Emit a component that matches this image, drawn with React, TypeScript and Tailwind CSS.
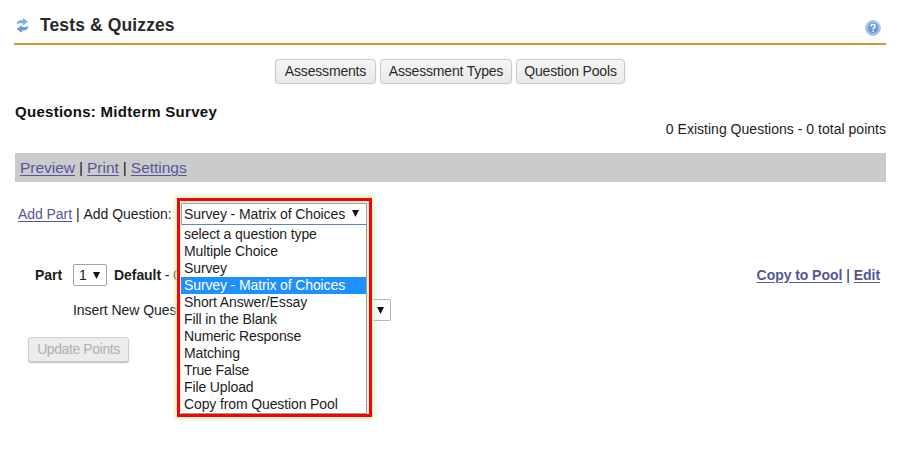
import React from "react";

const questionTypes = [
  "select a question type",
  "Multiple Choice",
  "Survey",
  "Survey - Matrix of Choices",
  "Short Answer/Essay",
  "Fill in the Blank",
  "Numeric Response",
  "Matching",
  "True False",
  "File Upload",
  "Copy from Question Pool",
];

function RefreshIcon() {
  return (
    <svg className="mt-[18px] ml-[2px] h-[15px] w-[13px] shrink-0" viewBox="0 0 13 15">
      <path d="M1 5.6 Q1.6 2.4 5 2.6 L7.2 2.6 V0.5 L11.4 3.8 L7.2 6.8 V5 H4.5 Q2.5 4.8 1 5.6Z" fill="#76b5e6" stroke="#5b9bd5" strokeWidth=".5" />
      <path d="M12 8.6 Q11.4 12.2 8 12 L5.6 12 V14.2 L1 11 L5.6 7.8 V9.6 H8.5 Q10.5 9.6 12 8.6Z" fill="#669ee2" stroke="#3e73c4" strokeWidth=".5" />
    </svg>
  );
}

function HelpIcon() {
  return (
    <svg className="mt-[20px] mr-[5px] h-4 w-4" viewBox="0 0 16 16">
      <circle cx="8" cy="8" r="7.4" fill="#a9c5ee" stroke="#92b2e3" strokeWidth=".7" />
      <circle cx="8" cy="8" r="5.4" fill="#6c99dc" />
      <path d="M5.9 6.4 Q6 4.5 8 4.5 Q10.1 4.5 10.1 6.2 Q10.1 7.2 9 7.8 Q8.1 8.2 8.1 9.2" fill="none" stroke="#fff" strokeWidth="1.5" />
      <circle cx="8.1" cy="11.1" r=".9" fill="#fff" />
    </svg>
  );
}

function Arrow({ className = "" }: { className?: string }) {
  return (
    <svg className={`h-[7px] w-[7px] shrink-0 ${className}`} viewBox="0 0 7 7">
      <path d="M0 0H7L3.5 7Z" fill="#111" />
    </svg>
  );
}

function NavButton({ className, children }: { className: string; children: string }) {
  return (
    <button className={`h-[25px] rounded-[4px] border border-[#cacaca] bg-gradient-to-b from-[#f5f5f5] to-[#e9e9e9] pb-px text-center tracking-[-0.18px] whitespace-nowrap text-[#2b2b2b] shadow-[0_0_1px_#ccc] ${className}`}>
      {children}
    </button>
  );
}

function Link({ children }: { children: string }) {
  return <a className="text-[#56569c] underline decoration-1 underline-offset-[2px]">{children}</a>;
}

function QuestionTypeSelect() {
  return (
    <div className="absolute top-0 left-0 z-10 h-[219px] w-[195px] border-[3px] border-[#fb0007] bg-[#e4f3cc] pt-[2px] pl-px tracking-[-0.12px] shadow-[0_0_4px_2px_#dcf0b8]">
      <div className="flex h-[22px] w-[186px] items-center border border-[#8fa9bb] border-b-[#6683aa] bg-white pl-[2px]">
        <span className="w-[168px] whitespace-nowrap">Survey - Matrix of Choices</span>
        <Arrow className="mb-[2px]" />
      </div>
      <ul className="h-[189px] w-[186px] border-r border-b border-[#8ca4a0] bg-white pt-px">
        {questionTypes.map((type, i) => (
          <li key={type} className={`h-[17px] pl-[3px] leading-[17px] whitespace-nowrap ${i === 3 ? "bg-[#1e90ff] text-white" : ""}`}>
            {type}
          </li>
        ))}
      </ul>
    </div>
  );
}

export default function App() {
  return (
    <main className="h-[456px] w-[908px] overflow-hidden bg-white pr-[22px] pl-[14px] font-['Liberation_Sans',Arial,sans-serif] text-[14px] leading-[17px] tracking-[-0.06px] text-[#1d1d1d]">
      <header className="flex h-[45px] items-start border-b-2 border-[#cb9b36]">
        <RefreshIcon />
        <h1 className="mt-[15px] ml-[11px] grow text-[17.5px] leading-[21px] font-bold tracking-[0.12px] text-[#292929]">Tests &amp; Quizzes</h1>
        <HelpIcon />
      </header>
      <nav className="mt-[14px] flex gap-1 pl-[261px]">
        <NavButton className="w-[101px]">Assessments</NavButton>
        <NavButton className="w-[132px]">Assessment Types</NavButton>
        <NavButton className="w-[109px]">Question Pools</NavButton>
      </nav>
      <h2 className="mt-[19px] h-[18px] pl-px text-[15px] font-bold tracking-[0.28px] text-[#111]">Questions: Midterm Survey</h2>
      <p className="text-right tracking-[0.02px]">0 Existing Questions - 0 total points</p>
      <div className="mt-[15px] ml-px flex h-[29px] items-center gap-1 bg-[#cbcbcb] pl-[5px] text-[15.5px] tracking-[-0.02px]">
        <Link>Preview</Link>
        <span>|</span>
        <Link>Print</Link>
        <span>|</span>
        <Link>Settings</Link>
      </div>
      <div className="mt-[16px] flex h-[36px] pl-1">
        <div className="mt-[8px] flex w-[159px] gap-1 whitespace-nowrap">
          <Link>Add Part</Link>
          <span>|</span>
          <span>Add Question:</span>
        </div>
        <div className="relative w-[195px]">
          <QuestionTypeSelect />
        </div>
      </div>
      <div className="mt-[30px] flex h-[22px] items-center pl-[21px]">
        <b className="w-[38px]">Part</b>
        <div className="flex h-[22px] w-[34px] items-center justify-between rounded-[2px] border border-[#a5a5a5] bg-white pr-[6px] pl-[5px]">
          1<Arrow />
        </div>
        <span className="ml-[7px] grow whitespace-nowrap"><b>Default</b> - 0</span>
        <div className="flex gap-1 pr-[6px] font-bold">
          <Link>Copy to Pool</Link>
          <span className="font-normal">|</span>
          <Link>Edit</Link>
        </div>
      </div>
      <div className="mt-[13px] flex h-[22px] items-center pl-[59px]">
        <span className="w-[136px] whitespace-nowrap">Insert New Quest</span>
        <div className="flex h-[22px] w-[182px] items-center justify-end rounded-[2px] border border-[#b5b5b5] pr-[6px]">
          <Arrow />
        </div>
      </div>
      <button className="mt-[16px] ml-[14px] h-[25px] w-[101px] rounded-[3px] border border-[#cfcfcf] bg-[#ececec] pb-px text-[#b0b0b0] tracking-[-0.4px] shadow-[0_1px_1px_#bbb]">Update Points</button>
    </main>
  );
}
